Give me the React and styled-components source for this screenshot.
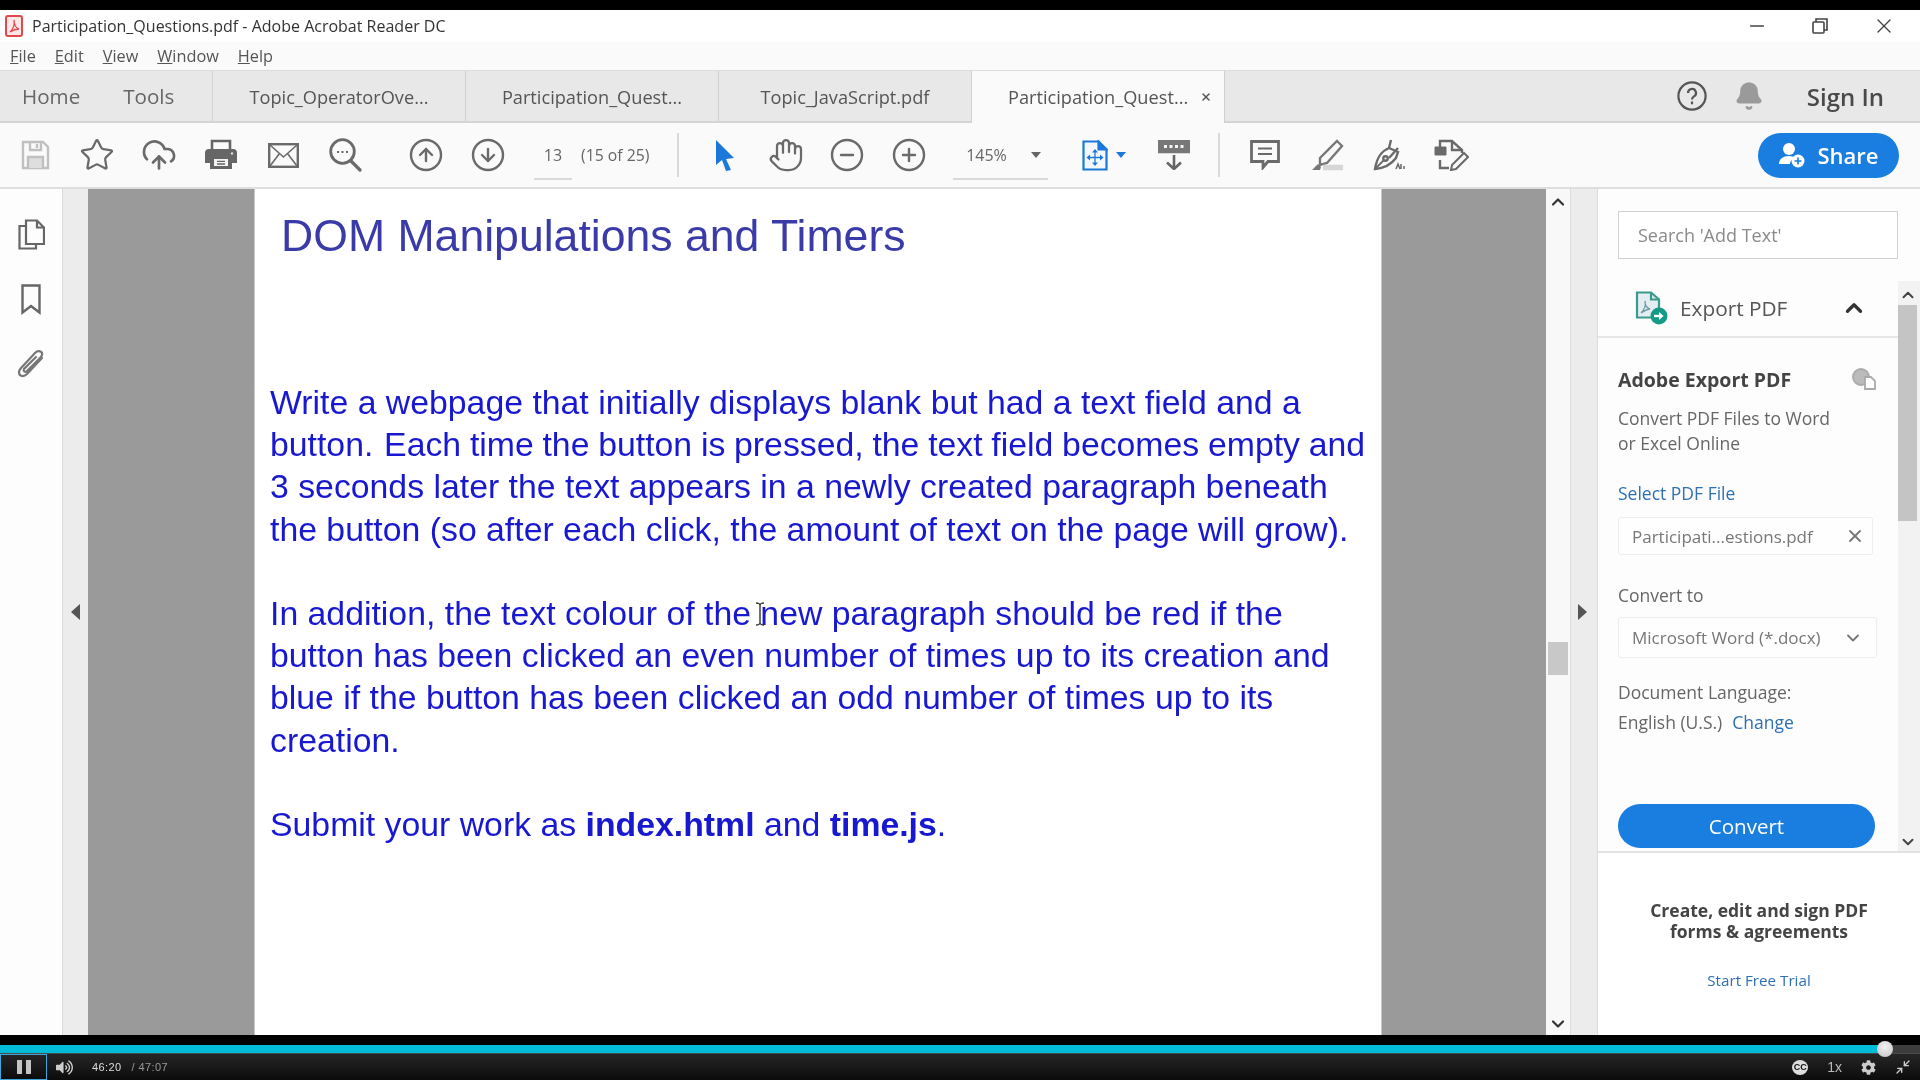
import React from "react"
import styled, { createGlobalStyle } from "styled-components"
import {
  Star, CloudUpload, CircleArrowUp, CircleArrowDown, Hand, CircleMinus, CirclePlus,
  ChevronUp, ChevronDown, Minus, X, Bell, Minimize2,
} from "lucide-react"
import { FaCog, FaVolumeUp } from "react-icons/fa"

const Global = createGlobalStyle`
html, body { margin: 0; padding: 0; background: #000; }
body { width: 1920px; height: 1080px; overflow: hidden; font-family: "Open Sans", "Noto Sans", sans-serif; }
* { box-sizing: border-box; }
svg { display: block; }
`

const Screen = styled.div`
width: 1920px;
height: 1080px;
display: flex;
flex-direction: column;
position: relative;
background: #000;
padding-top: 10px;
filter: blur(0.5px);
`

const TitleBar = styled.div`
height: 32px;
background: #fff;
display: flex;
align-items: center;
padding-left: 5px;
color: #333;
font-size: 16px;
`
const TitleText = styled.span`
margin-left: 9px;
white-space: nowrap;
`
const WinControls = styled.div`
margin-left: auto;
display: flex;
align-items: center;
padding-right: 24px;
color: #444;
gap: 44px;
`
const MenuBar = styled.div`
height: 29px;
background: #fafafa;
display: flex;
align-items: center;
padding: 0 0 1px 10px;
gap: 19px;
font-size: 16.3px;
color: #555;
border-bottom: 1px solid #dcdcdc;
`
const MenuItem = styled.span`
&::first-letter { text-decoration: underline; }
`

const TabBar = styled.div`
height: 52px;
background: #e8e8e8;
display: flex;
align-items: stretch;
border-bottom: 2px solid #d4d4d4;
color: #555;
`
const NavTabs = styled.div`
width: 213px;
display: flex;
align-items: center;
padding-left: 22px;
gap: 43px;
font-size: 20.6px;
color: #666;
border-right: 1px solid #d2d2d2;
`
const DocTab = styled.div`
width: ${p => p.$w}px;
display: flex;
align-items: center;
justify-content: ${p => (p.$active ? "flex-start" : "center")};
padding-left: ${p => (p.$active ? "36px" : "0")};
padding-top: 2px;
padding-bottom: ${p => (p.$active ? "2px" : "0")};
font-size: 18.2px;
white-space: nowrap;
position: relative;
background: ${p => (p.$active ? "#fafafa" : "transparent")};
border-right: 1px solid #cfcfcf;
margin-bottom: ${p => (p.$active ? "-2px" : "0")};
`
const TabClose = styled.span`
margin-left: 12px;
display: flex;
color: #555;
`
const TabRight = styled.div`
margin-left: auto;
display: flex;
align-items: center;
padding-right: 36px;
color: #555;
`
const BellWrap = styled.span`
margin-left: 27px;
color: #9a9a9a;
`
const SignIn = styled.span`
margin-left: 43px;
font-size: 24px;
font-weight: 600;
color: #4a4a4a;
`

const Toolbar = styled.div`
height: 66px;
background: #fafafa;
display: flex;
align-items: center;
padding-left: 4px;
border-bottom: 2px solid #dedede;
color: #6a6a6a;
`
const ToolBtn = styled.div`
width: ${p => p.$w || 62}px;
margin-left: ${p => p.$ml || 0}px;
display: flex;
justify-content: center;
align-items: center;
flex-shrink: 0;
`
const Field = styled.div`
width: ${p => p.$w}px;
margin-left: ${p => p.$ml}px;
height: 40px;
border-bottom: 2px solid #d8d8d8;
display: flex;
align-items: center;
justify-content: center;
font-size: 16px;
color: #666;
margin-top: 10px;
padding-bottom: 8px;
padding-left: ${p => p.$pl || 0}px;
flex-shrink: 0;
`
const PageCount = styled.span`
margin-left: 9px;
width: 96px;
font-size: 15.8px;
color: #666;
white-space: nowrap;
flex-shrink: 0;
`
const ToolSep = styled.div`
width: 2px;
height: 44px;
background: #dadada;
margin-left: ${p => p.$ml || 0}px;
flex-shrink: 0;
`
const ZoomCaret = styled.span`
width: 0;
height: 0;
margin-left: 24px;
border-left: 5px solid transparent;
border-right: 5px solid transparent;
border-top: 6px solid #666;
`
const FitCaret = styled.span`
width: 0;
height: 0;
margin-left: 8px;
border-left: 5px solid transparent;
border-right: 5px solid transparent;
border-top: 6px solid #1c78d8;
`
const ShareButton = styled.div`
margin-left: auto;
margin-right: 21px;
width: 141px;
height: 45px;
border-radius: 23px;
background: #1a7ee0;
color: #fff;
display: flex;
align-items: center;
justify-content: center;
gap: 11px;
font-size: 22px;
font-weight: 600;
`

const Main = styled.div`
height: 846px;
display: flex;
background: #fff;
position: relative;
`
const LeftRail = styled.div`
width: 62px;
display: flex;
flex-direction: column;
align-items: center;
padding-top: 30px;
gap: 34px;
color: #666;
background: #fdfdfd;
`
const Strip = styled.div`
width: ${p => p.$w}px;
background: #ececec;
border-left: 1px solid #dcdcdc;
display: flex;
align-items: center;
justify-content: center;
padding-right: ${p => p.$pr || 0}px;
flex-shrink: 0;
`
const Tri = styled.span`
width: 0;
height: 0;
border-top: 8px solid transparent;
border-bottom: 8px solid transparent;
${p => p.$left ? "border-right: 9px solid #555;" : "border-left: 9px solid #555;"}
`
const Gutter = styled.div`
width: ${p => p.$w}px;
background: #9a9a9a;
flex-shrink: 0;
`
const Page = styled.div`
width: 1128px;
background: #fff;
padding: 21px 0 0 15px;
border-left: 1px solid #c8c8c8;
border-right: 1px solid #c8c8c8;
color: #1818d0;
font-family: "Liberation Sans", Arial, sans-serif;
overflow: hidden;
flex-shrink: 0;
position: relative;
`
const PageTitle = styled.div`
margin-left: 11px;
font-size: 44.6px;
line-height: 52px;
color: #3a3aa8;
white-space: nowrap;
margin-bottom: 119px;
`
const Para = styled.div`
font-size: 33.8px;
line-height: 42.2px;
margin-bottom: 42.2px;
white-space: nowrap;
`
const TightLine = styled.span`
word-spacing: -0.65px;
`
const SentenceGap = styled.span`
margin-left: 2px;
`
const IBeam = styled.span`
position: absolute;
left: 500px;
top: 413px;
width: 10px;
height: 24px;
color: #222;
`
const ScrollCol = styled.div`
width: 24px;
background: #f8f8f8;
display: flex;
flex-direction: column;
align-items: center;
padding: 3px 0 1px;
color: #333;
flex-shrink: 0;
`
const MainThumb = styled.div`
width: 20px;
height: 33px;
background: #c8c8c8;
margin-top: 430px;
margin-bottom: auto;
`

const Panel = styled.div`
flex: 1;
display: flex;
flex-direction: column;
background: #fdfdfd;
border-left: 1px solid #dcdcdc;
`
const SearchArea = styled.div`
height: 92px;
padding: 22px 22px 0 20px;
`
const SearchBox = styled.div`
height: 48px;
border: 1.5px solid #d0d0d0;
background: #fff;
display: flex;
align-items: center;
padding-left: 19px;
font-size: 18px;
color: #8a8a8a;
`
const PanelBody = styled.div`
height: 572px;
display: flex;
border-bottom: 2px solid #e2e2e2;
`
const PanelContent = styled.div`
width: 300px;
display: flex;
flex-direction: column;
`
const ExportHead = styled.div`
height: 57px;
display: flex;
align-items: center;
padding: 0 0 2px 37px;
border-bottom: 2px solid #e6e6e6;
font-size: 20.8px;
color: #555;
`
const ExportLabel = styled.span`
margin-left: 12px;
`
const ChevronWrap = styled.span`
margin-left: auto;
margin-right: 31px;
color: #333;
`
const Section = styled.div`
padding: 27px 0 0 20px;
color: #666;
font-size: 17.5px;
`
const SectionHead = styled.div`
display: flex;
align-items: center;
justify-content: space-between;
padding-right: 22px;
font-size: 19.5px;
font-weight: 700;
color: #444;
height: 28px;
`
const Copy = styled.div`
margin-top: 13px;
line-height: 24.5px;
white-space: nowrap;
`
const Link = styled.div`
margin-top: ${p => p.$mt || 0}px;
color: #2f6fb5;
line-height: 24px;
`
const InlineLink = styled.span`
color: #2f6fb5;
margin-left: 10px;
`
const Input = styled.div`
margin-top: ${p => p.$mt}px;
width: ${p => p.$w}px;
height: ${p => p.$h}px;
border: 1px solid #ededed;
border-radius: 3px;
background: #fefefe;
display: flex;
align-items: center;
justify-content: space-between;
padding: 0 ${p => p.$pr}px 0 13px;
font-size: 17px;
white-space: nowrap;
color: #777;
`
const Label = styled.div`
margin-top: ${p => p.$mt}px;
line-height: 24px;
white-space: nowrap;
`
const ConvertBtn = styled.div`
margin-top: 70px;
width: 257px;
height: 44px;
border-radius: 22px;
background: #1a7ee0;
color: #fff;
font-size: 20.5px;
display: flex;
align-items: center;
justify-content: center;
`
const PanelScroll = styled.div`
width: 22px;
background: #f2f2f2;
display: flex;
flex-direction: column;
align-items: center;
padding: 5px 3px 0 0;
color: #444;
`
const PanelThumb = styled.div`
width: 19px;
height: 216px;
background: #c4c4c4;
margin: 1px 0 auto;
`
const Promo = styled.div`
background: #fff;
flex: 1;
display: flex;
flex-direction: column;
align-items: center;
padding: 47px 0 0 0;
font-size: 17.5px;
font-weight: 700;
line-height: 21px;
color: #444;
text-align: center;
`
const PromoLink = styled.div`
margin-top: 28px;
font-size: 15.2px;
font-weight: 400;
color: #2f6fb5;
`

const Spacer = styled.div`
height: 10px;
background: #000;
`
const Progress = styled.div`
height: 8px;
background: #3d3d3d;
position: relative;
`
const ProgressFill = styled.div`
height: 100%;
background: #00bcd9;
`
const Knob = styled.div`
position: absolute;
top: -4px;
width: 16px;
height: 16px;
margin-left: -8px;
border-radius: 50%;
background: radial-gradient(circle at 50% 35%, #f2f2f2, #c2c2c2);
`
const Controls = styled.div`
flex: 1;
background: linear-gradient(#262626, #0b0b0b);
border-top: 1px solid #4a4a4a;
display: flex;
align-items: center;
color: #ccc;
font-size: 11px;
font-family: "Liberation Sans", Arial, sans-serif;
`
const PauseBox = styled.div`
width: 47px;
height: 100%;
border: 1px solid #3fa6e0;
display: flex;
align-items: center;
justify-content: center;
gap: 4px;
`
const PauseBar = styled.span`
width: 5px;
height: 14px;
background: #c4c4c4;
`
const VolumeWrap = styled.span`
margin-left: 9px;
color: #ccc;
`
const TimeNow = styled.span`
margin-left: 19px;
color: #ddd;
letter-spacing: 0.4px;
`
const TimeTotal = styled.span`
margin-left: 10px;
color: #999;
letter-spacing: 0.4px;
`
const CtrlRight = styled.div`
margin-left: auto;
display: flex;
align-items: center;
padding-right: 9px;
gap: 19px;
`
const CC = styled.span`
width: 16px;
height: 15px;
border-radius: 50%;
background: #ddd;
color: #111;
font-size: 9px;
font-weight: 700;
display: flex;
align-items: center;
justify-content: center;
`
const Speed = styled.span`
font-size: 14px;
color: #bbb;
`

const SaveIcon = () => (
  <svg width="29" height="30" viewBox="0 0 29 30" fill="none" stroke="#c0c0c0" strokeWidth="2.4">
    <path d="M2 2h20l5 5v21H2z" />
    <path d="M9 2v8h11V2" /><path d="M7 28V17h15v11" fill="#dedede" />
    <path d="M16 4v4" />
  </svg>
)
const PrintIcon = () => (
  <svg width="32" height="32" viewBox="0 0 32 32">
    <path d="M7 10V2h18v8" fill="none" stroke="#666" strokeWidth="2.6" />
    <path d="M4 10h24a4 4 0 0 1 4 4v10h-5v6H5v-6H0V14a4 4 0 0 1 4-4z" fill="#666" />
    <path d="M9 20h14v7H9z" fill="#f4f4f4" /><path d="M12 22.4h8M12 25h8" stroke="#666" strokeWidth="1.3" />
    <circle cx="27" cy="14.5" r="1.2" fill="#ddd" />
  </svg>
)
const MailIcon = () => (
  <svg width="31" height="25" viewBox="0 0 31 25" fill="none" stroke="#6a6a6a" strokeWidth="2.4">
    <rect x="1.2" y="1.2" width="28.6" height="22.6" /><path d="M2 2l13.5 12L29 2M2 23l9.5-12.5M29 23l-9.5-12.5" strokeWidth="1.6" />
  </svg>
)
const SearchDots = () => (
  <svg width="33" height="34" viewBox="0 0 33 34" fill="none" stroke="#6a6a6a" strokeWidth="2.8">
    <circle cx="13.5" cy="13.5" r="11.8" /><path d="M22 23l9 9" strokeWidth="3.2" strokeLinecap="round" />
    <path d="M8 14h2M12.5 14h2M17 14h2" strokeWidth="2.2" />
  </svg>
)
const Pointer = () => (
  <svg width="20" height="32" viewBox="0 0 20 32" fill="#1c78d8">
    <path d="M1 1l18 18-8 1 5 11-5 1-4-11-6 5z" />
  </svg>
)
const FitIcon = () => (
  <svg width="26" height="31" viewBox="0 0 26 31" fill="none" stroke="#1c78d8" strokeWidth="2.2">
    <path d="M1.5 1.5h15l8 8v20h-23z" fill="#f4f8fc" /><path d="M16.5 1.5v8h8z" fill="#1c78d8" />
    <path d="M13 11v13M7 17.5h12" strokeWidth="1.3" />
    <path d="M13 9l-3 3.5h6zM13 26l-3-3.5h6zM4.5 17.5L8 14.5v6zM21.5 17.5L18 14.5v6z" fill="#1c78d8" stroke="none" />
  </svg>
)
const KeyDown = () => (
  <svg width="32" height="30" viewBox="0 0 32 30" fill="none" stroke="#666" strokeWidth="2.6">
    <path d="M1 1h30v11H1z" fill="#777" stroke="#777" />
    <path d="M6 6.5h3M11.5 6.5h3M17 6.5h3M22.5 6.5h3" stroke="#f4f4f4" strokeWidth="3" />
    <path d="M16 15v14M9 22.5l7 6.5 7-6.5" />
  </svg>
)
const CommentIcon = () => (
  <svg width="30" height="30" viewBox="0 0 30 30" fill="none" stroke="#6a6a6a" strokeWidth="2.8">
    <path d="M1.5 1.5h27v20H18l-5 6v-6H1.5z" /><path d="M8 8.5h14M8 14h14" strokeWidth="1.8" />
  </svg>
)
const PenIcon = () => (
  <svg width="33" height="32" viewBox="0 0 33 32" fill="none">
    <path d="M26 2l5 5-15 17-7 2 0-7z" stroke="#777" strokeWidth="2.4" />
    <path d="M1 31l6-6 3 3-1 3z" fill="#777" />
    <path d="M12 28.5h20" stroke="#d6d6d6" strokeWidth="5.5" />
  </svg>
)
const SignIcon = () => (
  <svg width="33" height="32" viewBox="0 0 33 32" fill="none" stroke="#6a6a6a" strokeWidth="2.4">
    <path d="M18 1l-2 8M25 13l-9-4C9 12 4 17 2 30c11-1 18-7 21-11z" /><path d="M25 9l-9 10" />
    <path d="M2 30l9-9" strokeWidth="1.8" /><circle cx="12.5" cy="19.5" r="2.2" />
    <path d="M23 30l2-5 2 5M28 25v5M31 27v3" strokeWidth="1.5" />
  </svg>
)
const EditIcon = () => (
  <svg width="35" height="32" viewBox="0 0 35 32" fill="none" stroke="#6a6a6a" strokeWidth="2.4">
    <path d="M1 8h11v8H1z" fill="#6a6a6a" strokeWidth="1" /><path d="M6 8V2h12l10 9v3" /><path d="M18 2v9h10" />
    <path d="M6 21v8h9" />
    <path d="M30 14l4 4-12 12-5 1 1-5z" strokeWidth="2" />
  </svg>
)
const HelpIcon = () => (
  <svg width="30" height="30" viewBox="0 0 30 30" fill="none" stroke="#555" strokeWidth="2.2">
    <circle cx="15" cy="15" r="13.6" /><path d="M11 12a4 4 0 1 1 6 3.4c-1.5.9-2 1.6-2 3.2" /><path d="M15 20.5v2.8" />
  </svg>
)
const RestoreIcon = () => (
  <svg width="16" height="16" viewBox="0 0 16 16" fill="none" stroke="#444" strokeWidth="1.6">
    <rect x="1" y="4" width="11" height="11" rx="1" /><path d="M4 4V1h11v11h-3" />
  </svg>
)
const PdfIcon = () => (
  <svg width="18" height="22" viewBox="0 0 18 22" fill="#fff" stroke="#e2474c" strokeWidth="2">
    <rect x="1" y="1" width="16" height="20" rx="2" fill="#fde8e8" />
    <path d="M5 17c3-3 5-8 4-12 0 4 2 8 5 9-3 0-6 1-9 3z" fill="none" strokeWidth="1.3" />
  </svg>
)
const ShareUser = () => (
  <svg width="28" height="26" viewBox="0 0 28 26" fill="#fff">
    <circle cx="11" cy="7" r="6" /><path d="M1 22c0-5 4-8 10-8 3 0 5 1 6 2-3 1-5 3-5 6z" />
    <circle cx="20" cy="19" r="6.5" /><path d="M20 15.5v7M16.5 19h7" stroke="#1a7ee0" strokeWidth="1.6" />
  </svg>
)
const ExportIcon = () => (
  <svg width="33" height="34" viewBox="0 0 33 34" fill="none" stroke="#3a9a8c" strokeWidth="2.2">
    <path d="M2 1.5h14l8 7v18H2z" fill="#e4eef2" /><path d="M16 1.5v7h8" />
    <path d="M6 22c3-3 5-8 4-12 0 4 2 7 5 8-3 0-6 2-9 4z" strokeWidth="1.3" stroke="#6f9aa5" />
    <circle cx="24" cy="25" r="8.5" fill="#159a86" stroke="none" />
    <path d="M19 25h7" stroke="#fff" strokeWidth="2.4" /><path d="M24 21l4.500 4-4.500 4z" fill="#fff" stroke="none" />
  </svg>
)
const CopyGlobe = () => (
  <svg width="24" height="22" viewBox="0 0 24 22" fill="none" stroke="#aaa" strokeWidth="1.8">
    <circle cx="9" cy="9" r="8" fill="#bbb" /><path d="M13 9h6l4 4v8H13z" fill="#fff" />
  </svg>
)
const FilesIcon = () => (
  <svg width="27" height="31" viewBox="0 0 27 31" fill="none" stroke="#666" strokeWidth="2.2">
    <path d="M8 25V1.5h11l7 7V25z" /><path d="M19 1.5v7h7" /><path d="M8 7H1.5v22.5H18V25" />
  </svg>
)
const BookmarkIcon = () => (
  <svg width="20" height="31" viewBox="0 0 20 31" fill="none" stroke="#666" strokeWidth="2.4">
    <path d="M1.5 1.5h17v27L10 22l-8.500 6.500z" />
  </svg>
)
const ClipIcon = () => (
  <svg width="28" height="30" viewBox="0 0 28 30" fill="none" stroke="#777" strokeWidth="2.2" strokeLinecap="round">
    <path d="M25 9L10 25c-3 3-8 3-8-2 0-2 1-3 3-5L18 4c3-3 8-2 7 2-.5 2-2 3-3 4L10 22c-2 2-4 0-3-2L19 8" />
  </svg>
)
const CursorGlyph = () => (
  <svg width="10" height="24" viewBox="0 0 10 24" fill="none" stroke="#333" strokeWidth="1.4">
    <path d="M1 1c2 0 4 1 4 2v18c0 1-2 2-4 2M9 1c-2 0-4 1-4 2M9 23c-2 0-4-1-4-2" />
  </svg>
)

const App = () => {
  return (
    <Screen>
      <Global />
      <TitleBar>
        <PdfIcon />
        <TitleText>Participation_Questions.pdf - Adobe Acrobat Reader DC</TitleText>
        <WinControls>
          <Minus size={22} strokeWidth={1.4} />
          <RestoreIcon />
          <X size={24} strokeWidth={1.4} />
        </WinControls>
      </TitleBar>
      <MenuBar>
        <MenuItem>File</MenuItem>
        <MenuItem>Edit</MenuItem>
        <MenuItem>View</MenuItem>
        <MenuItem>Window</MenuItem>
        <MenuItem>Help</MenuItem>
      </MenuBar>
      <TabBar>
        <NavTabs><span>Home</span><span>Tools</span></NavTabs>
        <DocTab $w={253}>Topic_OperatorOve...</DocTab>
        <DocTab $w={253}>Participation_Quest...</DocTab>
        <DocTab $w={253}>Topic_JavaScript.pdf</DocTab>
        <DocTab $w={253} $active>
          Participation_Quest...
          <TabClose><X size={12} strokeWidth={3} /></TabClose>
        </DocTab>
        <TabRight>
          <HelpIcon />
          <BellWrap><Bell size={30} fill="#9a9a9a" /></BellWrap>
          <SignIn>Sign In</SignIn>
        </TabRight>
      </TabBar>
      <Toolbar>
        <ToolBtn><SaveIcon /></ToolBtn>
        <ToolBtn><Star size={36} strokeWidth={1.5} /></ToolBtn>
        <ToolBtn><CloudUpload size={36} strokeWidth={1.8} /></ToolBtn>
        <ToolBtn><PrintIcon /></ToolBtn>
        <ToolBtn><MailIcon /></ToolBtn>
        <ToolBtn><SearchDots /></ToolBtn>
        <ToolBtn $ml={19}><CircleArrowUp size={36} strokeWidth={1.6} /></ToolBtn>
        <ToolBtn><CircleArrowDown size={36} strokeWidth={1.6} /></ToolBtn>
        <Field $w={38} $ml={15}>13</Field>
        <PageCount>(15 of 25)</PageCount>
        <ToolSep />
        <ToolBtn $ml={15}><Pointer /></ToolBtn>
        <ToolBtn $w={60}><Hand size={36} strokeWidth={1.5} /></ToolBtn>
        <ToolBtn><CircleMinus size={36} strokeWidth={1.6} /></ToolBtn>
        <ToolBtn><CirclePlus size={36} strokeWidth={1.6} /></ToolBtn>
        <Field $w={95} $ml={13} $pl={6}>145%<ZoomCaret /></Field>
        <ToolBtn $ml={31} $w={50}><FitIcon /><FitCaret /></ToolBtn>
        <ToolBtn $ml={14}><KeyDown /></ToolBtn>
        <ToolSep $ml={13} />
        <ToolBtn $ml={14}><CommentIcon /></ToolBtn>
        <ToolBtn><PenIcon /></ToolBtn>
        <ToolBtn><SignIcon /></ToolBtn>
        <ToolBtn><EditIcon /></ToolBtn>
        <ShareButton><ShareUser />Share</ShareButton>
      </Toolbar>
      <Main>
        <LeftRail>
          <FilesIcon />
          <BookmarkIcon />
          <ClipIcon />
        </LeftRail>
        <Strip $w={26}><Tri $left /></Strip>
        <Gutter $w={166} />
        <Page>
          <PageTitle>DOM Manipulations and Timers</PageTitle>
          <Para>
            Write a webpage that initially displays blank but had a text field and a<br />
            <TightLine>button. <SentenceGap />Each time the button is pressed, the text field becomes empty and</TightLine><br />
            3 seconds later the text appears in a newly created paragraph beneath<br />
            the button (so after each click, the amount of text on the page will grow).
          </Para>
          <Para>
            In addition, the text colour of the new paragraph should be red if the<br />
            button has been clicked an even number of times up to its creation and<br />
            blue if the button has been clicked an odd number of times up to its<br />
            creation.
          </Para>
          <Para>
            Submit your work as <b>index.html</b> and <b>time.js</b>.
          </Para>
          <IBeam><CursorGlyph /></IBeam>
        </Page>
        <Gutter $w={164} />
        <ScrollCol>
          <ChevronUp size={20} strokeWidth={2.6} />
          <MainThumb />
          <ChevronDown size={20} strokeWidth={2.6} />
        </ScrollCol>
        <Strip $w={27} $pr={4}><Tri /></Strip>
        <Panel>
          <SearchArea><SearchBox>Search 'Add Text'</SearchBox></SearchArea>
          <PanelBody>
            <PanelContent>
              <ExportHead>
                <ExportIcon />
                <ExportLabel>Export PDF</ExportLabel>
                <ChevronWrap><ChevronUp size={26} strokeWidth={3} /></ChevronWrap>
              </ExportHead>
              <Section>
                <SectionHead>Adobe Export PDF<CopyGlobe /></SectionHead>
                <Copy>Convert PDF Files to Word<br />or Excel Online</Copy>
                <Link $mt={26}>Select PDF File</Link>
                <Input $mt={12} $w={255} $h={38} $pr={7}>Participati...estions.pdf<X size={20} strokeWidth={2.2} /></Input>
                <Label $mt={28}>Convert to</Label>
                <Input $mt={10} $w={259} $h={41} $pr={13}>Microsoft Word (*.docx)<ChevronDown size={20} strokeWidth={2.2} /></Input>
                <Label $mt={22}>Document Language:</Label>
                <Label $mt={6}>English (U.S.)<InlineLink>Change</InlineLink></Label>
                <ConvertBtn>Convert</ConvertBtn>
              </Section>
            </PanelContent>
            <PanelScroll>
              <ChevronUp size={18} strokeWidth={2.6} />
              <PanelThumb />
              <ChevronDown size={18} strokeWidth={2.6} />
            </PanelScroll>
          </PanelBody>
          <Promo>
            Create, edit and sign PDF<br />forms &amp; agreements
            <PromoLink>Start Free Trial</PromoLink>
          </Promo>
        </Panel>
      </Main>
      <Spacer />
      <Progress>
        <ProgressFill style={{ width: `${(1885 / 1920) * 100}%` }} />
        <Knob style={{ left: 1885 }} />
      </Progress>
      <Controls>
        <PauseBox><PauseBar /><PauseBar /></PauseBox>
        <VolumeWrap><FaVolumeUp size={17} /></VolumeWrap>
        <TimeNow>46:20</TimeNow>
        <TimeTotal>/ 47:07</TimeTotal>
        <CtrlRight>
          <CC>CC</CC>
          <Speed>1x</Speed>
          <FaCog size={15} />
          <Minimize2 size={16} />
        </CtrlRight>
      </Controls>
    </Screen>
  )
}

export default App
